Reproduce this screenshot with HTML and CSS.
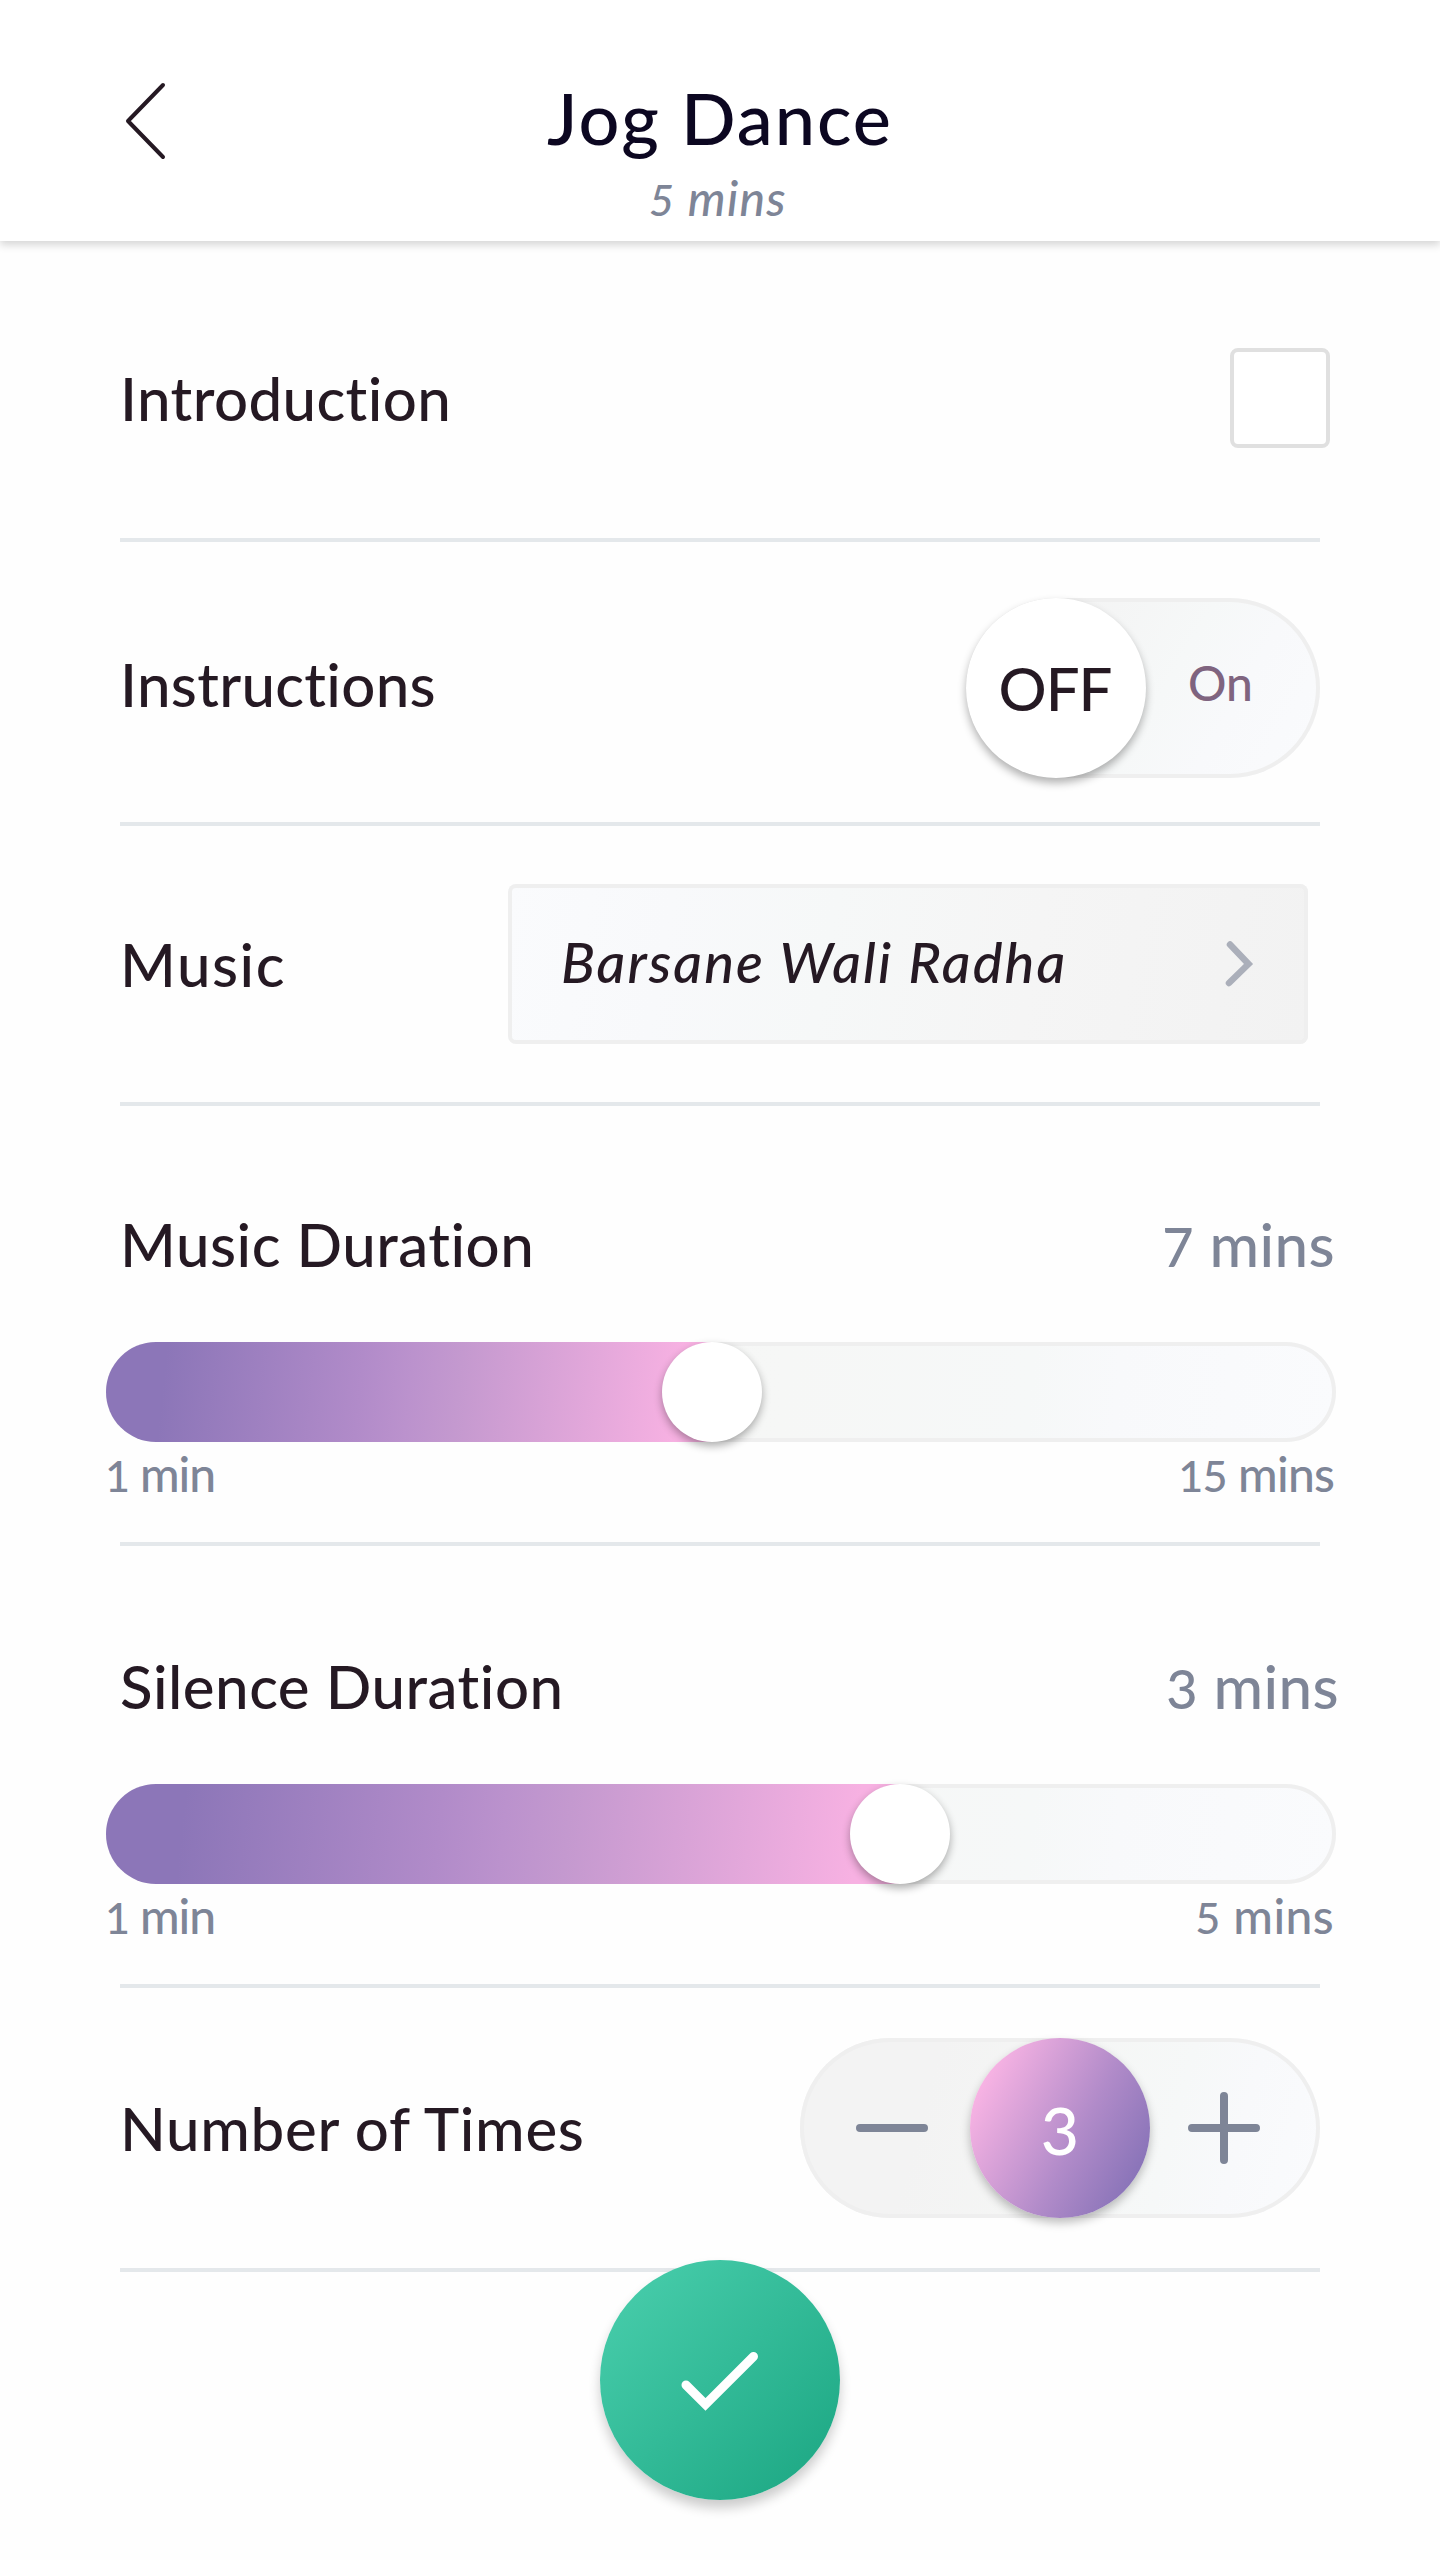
FILE: index.html
```
<!DOCTYPE html>
<html lang="en">
<head>
<meta charset="utf-8">
<title>Jog Dance</title>
<link rel="stylesheet" href="styles.css">
</head>
<body>
<header class="header">
  <svg class="back" width="44" height="80" viewBox="0 0 44 80"><path d="M41 4 6 40 41 76" fill="none" stroke="#251923" stroke-width="4" stroke-linecap="round" stroke-linejoin="round"/></svg>
  <div class="heading">
    <h1 class="title">Jog Dance</h1>
    <p class="subtitle"><span class="digit">5</span> mins</p>
  </div>
</header>
<main class="settings">
  <section class="row row-intro">
    <span class="label t-intro">Introduction</span>
    <span class="checkbox"></span>
  </section>
  <section class="row row-toggle">
    <span class="label t-instr">Instructions</span>
    <div class="toggle"><span class="toggle-knob">OFF</span><span class="toggle-on">On</span></div>
  </section>
  <section class="row row-music">
    <span class="label t-music">Music</span>
    <div class="picker">
      <span class="picker-text">Barsane Wali Radha</span>
      <svg width="32" height="52" viewBox="0 0 32 52"><path d="M6 6.500 24.500 26 5 45" fill="none" stroke="#abafba" stroke-width="6.500" stroke-linecap="round"/></svg>
    </div>
  </section>
  <section class="row row-slider">
    <div class="slider-head"><span class="label">Music Duration</span><span class="value"><span class="digit">7</span> mins</span></div>
    <div class="slider"><span class="fill" style="width:606px"></span><span class="knob"></span></div>
    <div class="range"><span class="min"><span class="digit">1</span> min</span><span class="max-15"><span class="digit">15</span> mins</span></div>
  </section>
  <section class="row row-slider row-silence">
    <div class="slider-head"><span class="label">Silence Duration</span><span class="value value-3"><span class="digit">3</span> mins</span></div>
    <div class="slider"><span class="fill" style="width:794px"></span><span class="knob"></span></div>
    <div class="range"><span class="min"><span class="digit">1</span> min</span><span class="max"><span class="digit">5</span> mins</span></div>
  </section>
  <section class="row row-times">
    <span class="label t-times">Number of Times</span>
    <div class="stepper">
      <svg width="72" height="72" viewBox="0 0 72 72"><path d="M4 36H68" stroke="#7e8597" stroke-width="8" stroke-linecap="round"/></svg>
      <span class="count">3</span>
      <svg width="72" height="72" viewBox="0 0 72 72"><path d="M4 36H68M36 4V68" stroke="#7e8597" stroke-width="8" stroke-linecap="round"/></svg>
    </div>
  </section>
</main>
<div class="fab">
  <svg width="96" height="80" viewBox="0 0 96 80"><path d="M14 45 33.500 64.500 81.500 16.500" fill="none" stroke="#fff" stroke-width="9" stroke-linecap="round"/></svg>
</div>
</body>
</html>
```
FILE: styles.css
```
* { box-sizing: border-box; }
body {
  margin: 0;
  height: 2560px;
  background: #fefefe;
  color: #251923;
  font-family: Lato, "Open Sans", sans-serif;
  font-weight: 500;
  font-variant-ligatures: none;
  overflow: hidden;
}
svg { display: block; flex: none; }
span { white-space: nowrap; }

.header {
  position: relative;
  display: grid;
  grid-template-columns: 122px 1fr 122px;
  height: 241px;
  background: #fff;
  box-shadow: 0 4px 8px rgba(0, 0, 0, .16);
}
.back { margin: 81px 0 0 122px; }
.heading { padding-top: 81px; text-align: center; }
.title { margin: 0; font-size: 72px; font-weight: 500; line-height: 72px; letter-spacing: 2px; color: #0c0721; }
.subtitle { margin: 21px 4px 0 0; font-size: 48px; font-style: italic; line-height: 48px; letter-spacing: 1.3px; color: #7e8597; }
.digit { font-size: .9em; }

.settings { padding: 0 120px; }
.row { display: flex; justify-content: space-between; border-bottom: 4px solid #e4e8eb; }
.label { font-size: 60px; line-height: 60px; letter-spacing: .5px; }

.row-intro { height: 297px; padding-top: 107px; margin-right: -10px; border: 0; }
.row-intro .label { margin-top: 20px; letter-spacing: .4px; }
.checkbox { width: 100px; height: 100px; border: 4px solid #e0e0e0; border-radius: 8px; background: #fff; }

.row-toggle { height: 288px; padding-top: 56px; border-top: 4px solid #e4e8eb; }
.row-toggle .label { margin-top: 56px; letter-spacing: .3px; }
.toggle {
  display: flex;
  align-items: center;
  width: 354px;
  height: 180px;
  border-radius: 90px;
  box-shadow: inset 0 0 0 4px #efefef;
  background: linear-gradient(120deg, #f3f3f3 20%, #f6f8f8 55%, #f8f9fb 72%, #fafbfd);
}
.toggle-knob {
  width: 180px;
  height: 180px;
  padding-right: 2px;
  border-radius: 50%;
  background: #fff;
  box-shadow: 0 5px 9px rgba(0, 0, 0, .3);
  font-size: 60px;
  line-height: 180px;
  text-align: center;
  letter-spacing: -1px;
}
.toggle-on { margin: -11px 0 0 42px; font-size: 48px; line-height: 48px; color: #7f647f; }

.row-music { height: 280px; padding: 58px 12px 0 0; }
.row-music .label { margin-top: 50px; letter-spacing: 1.5px; }
.picker {
  display: flex;
  align-items: center;
  justify-content: space-between;
  width: 800px;
  height: 160px;
  padding: 0 52px 0 53px;
  border-radius: 8px;
  box-shadow: inset 0 0 0 4px #efefef;
  background: linear-gradient(100deg, #fafbfd, #f8f9fb 20%, #f6f8f8 40%, #f5f5f5 65%, #f2f2f2);
}
.picker-text { margin-top: -5px; font-size: 56px; font-style: italic; line-height: 56px; letter-spacing: 2.1px; }

.row-slider { display: block; height: 440px; padding-top: 108px; }
.row-silence { height: 442px; padding-top: 110px; }
.slider-head { display: flex; justify-content: space-between; height: 60px; margin-right: -15px; }
.value { font-size: 60px; line-height: 60px; color: #7e8597; letter-spacing: .4px; }
.value-3 { margin-right: -4px; }
.slider {
  display: flex;
  height: 100px;
  margin: 68px -16px 0 -14px;
  border-radius: 50px;
  box-shadow: inset 0 0 0 4px #efefef;
  background: linear-gradient(95deg, #f3f3f3, #f6f7f6 55%, #f6f8f8 75%, #f8f9fb 82%, #fafbfd);
}
.fill {
  flex: none;
  border-radius: 50px 0 0 50px;
  background: linear-gradient(96deg, #8c76b8 10%, #b18bc9 42%, #bb92cd 50%, #c499cf 58%, #f7b1e2 94%);
}
.knob {
  flex: none;
  width: 100px;
  height: 100px;
  margin-left: -50px;
  border-radius: 50%;
  background: #fff;
  box-shadow: 0 4px 8px rgba(0, 0, 0, .32);
}
.range {
  display: flex;
  justify-content: space-between;
  height: 48px;
  margin: 8px -14px 0 -15px;
  font-size: 48px;
  line-height: 48px;
  color: #7e8597;
}
.min { letter-spacing: -1.1px; }
.max-15 { letter-spacing: -.8px; }
.max { letter-spacing: .4px; }

.row-times { height: 284px; padding-top: 50px; }
.row-times .label { margin-top: 60px; letter-spacing: .7px; }
.stepper {
  display: flex;
  align-items: center;
  width: 520px;
  height: 180px;
  padding-left: 56px;
  border-radius: 90px;
  box-shadow: inset 0 0 0 4px #efefef;
  background: linear-gradient(105deg, #f3f3f3 25%, #f5f6f5 50%, #f6f8f8 70%, #f8f9fb 82%, #fafbfd);
}
.count {
  width: 180px;
  height: 180px;
  margin: 0 38px 0 42px;
  border-radius: 50%;
  background: linear-gradient(118deg, #f9b4e4 12%, #b18bc9 58%, #8672b7 90%);
  box-shadow: 0 5px 10px rgba(0, 0, 0, .25);
  color: #fff;
  font-size: 66px;
  line-height: 184px;
  text-align: center;
}

.fab {
  position: relative;
  display: flex;
  align-items: center;
  justify-content: center;
  width: 240px;
  height: 240px;
  margin: -12px auto 0;
  border-radius: 50%;
  background: linear-gradient(135deg, #4bd0ae, #1aa581);
  box-shadow: 0 8px 12px rgba(0, 0, 0, .2);
}
```
